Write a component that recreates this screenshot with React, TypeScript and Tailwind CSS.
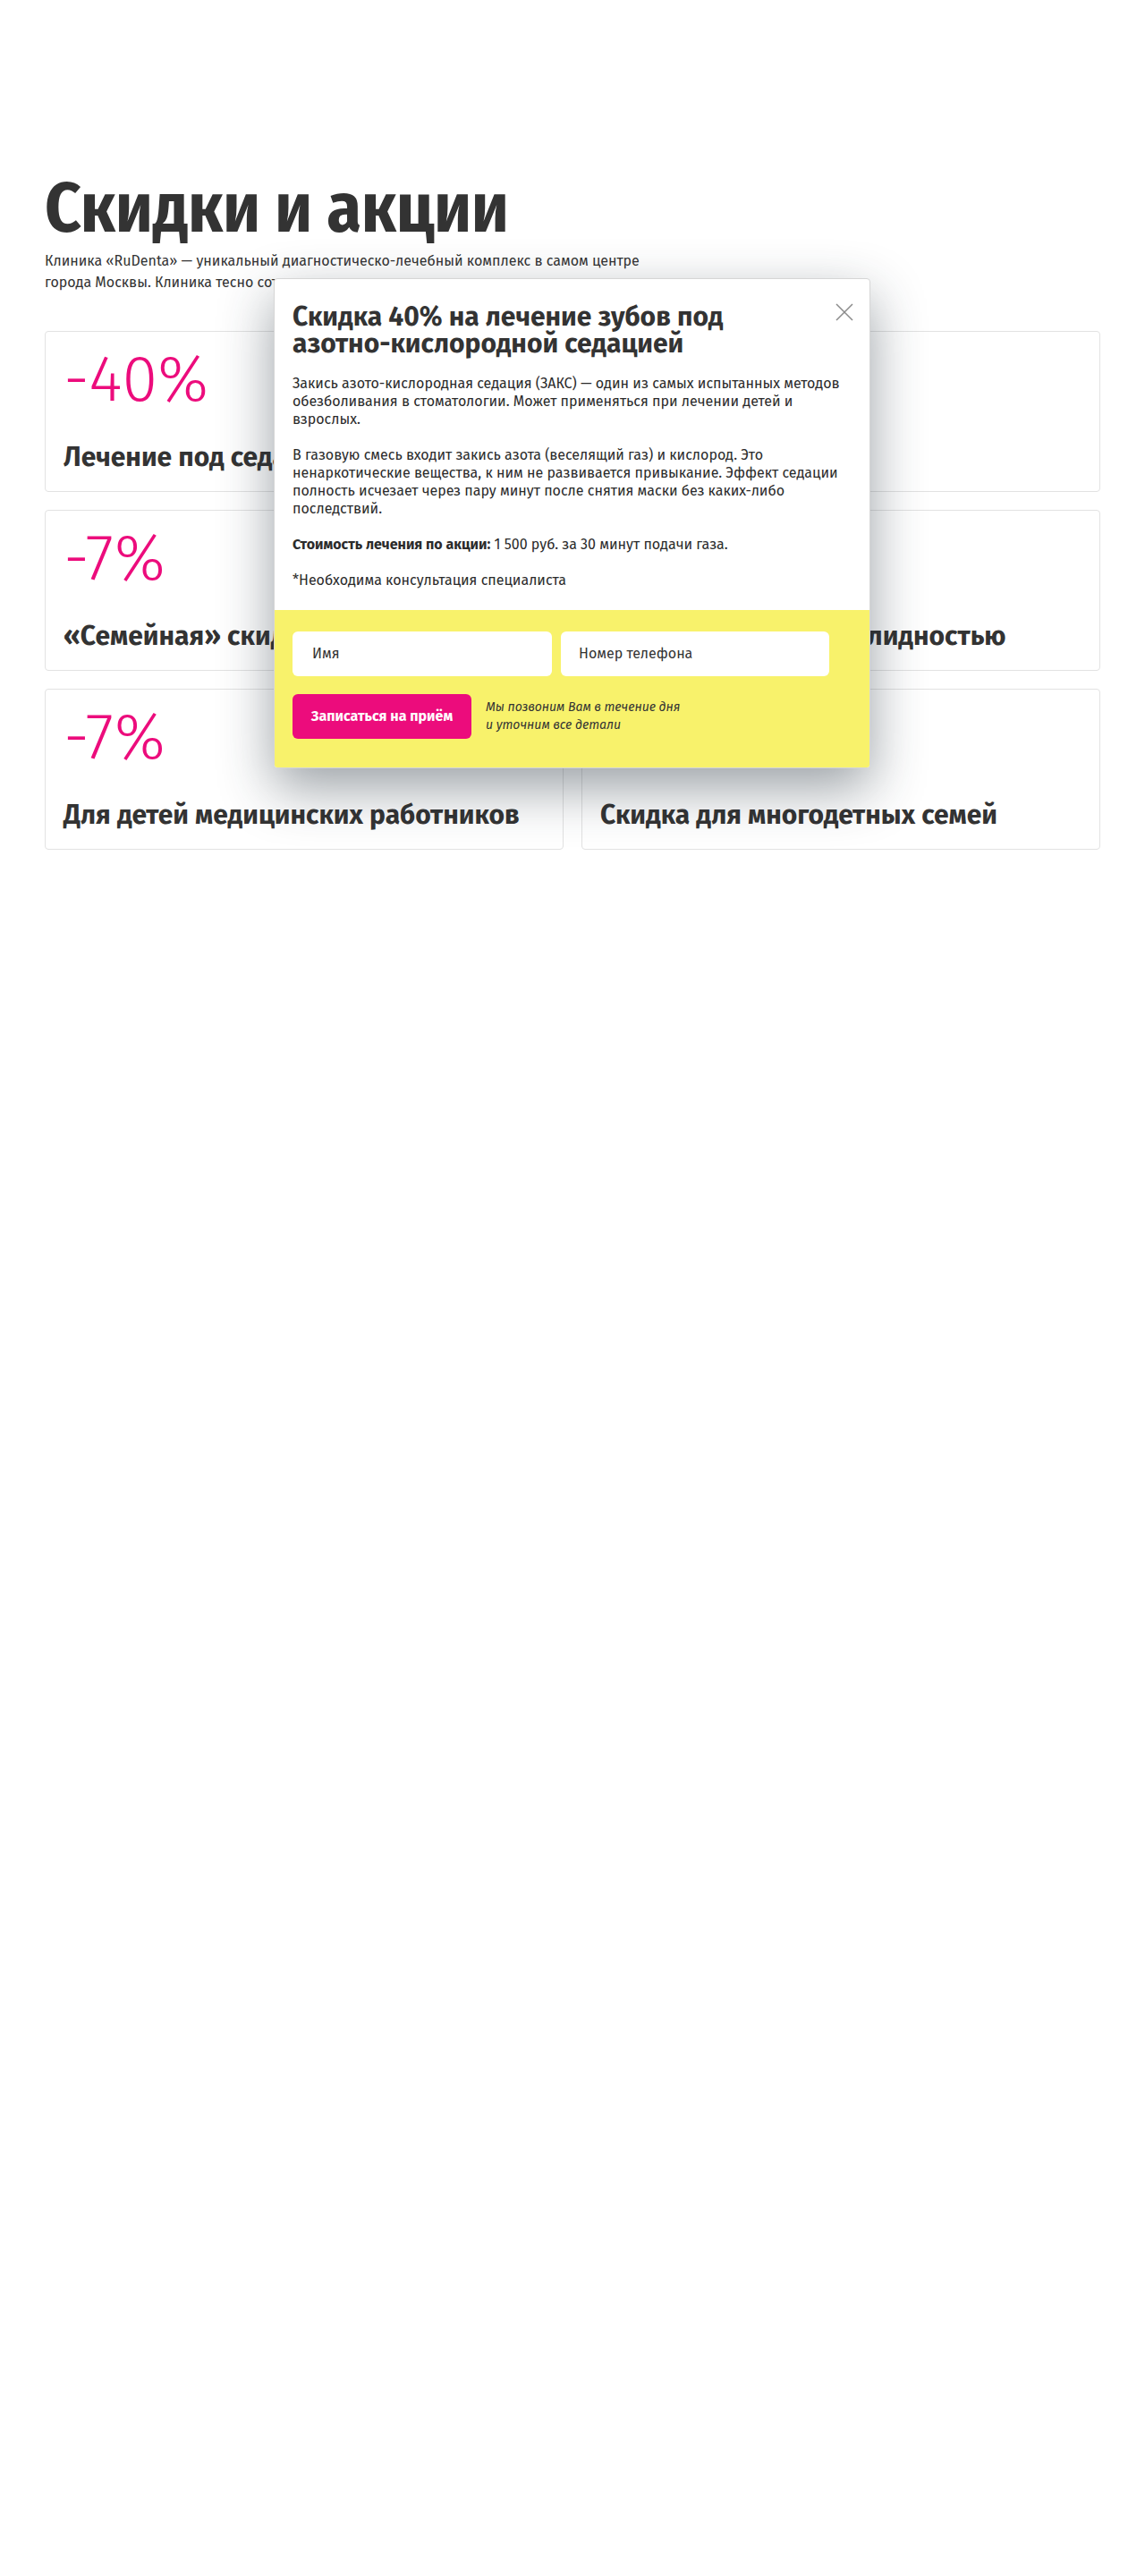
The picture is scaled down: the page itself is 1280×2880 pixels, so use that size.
import React from "react";

const font = { fontFamily: '"Fira Sans", Roboto, "Noto Sans", sans-serif' };
const condensed = { fontFamily: '"Fira Sans Condensed", "Fira Sans", Roboto, sans-serif', fontStretch: "condensed" as const };

type Card = { pct: string; title: string };

const cards: Card[] = [
  { pct: "-40%", title: "Лечение под седацией" },
  { pct: "-10%", title: "Пенсионерам" },
  { pct: "-7%", title: "«Семейная» скидка" },
  { pct: "-10%", title: "Скидка людям с инвалидностью" },
  { pct: "-7%", title: "Для детей медицинских работников" },
  { pct: "-10%", title: "Скидка для многодетных семей" },
];

export default function App() {
  return (
    <div className="relative min-h-[2880px] w-full bg-white text-[#333]" style={font}>
      <div className="mx-auto w-[1180px] pt-[191px]">
        <h1 className="text-[78px] font-bold leading-[84px] text-[#333]" style={condensed}>Скидки и акции</h1>
        <p className="mt-[5px] text-[16px] leading-[24px] text-[#333]">
          Клиника «RuDenta» — уникальный диагностическо-лечебный комплекс в самом центре
          <br />
          города Москвы. Клиника тесно сотрудничает с ведущими медицинскими центрами.
        </p>
        <div className="mt-[42px] grid grid-cols-2 gap-5">
          {cards.map((c, i) => (
            <div key={i} className="flex h-[180px] flex-col justify-between rounded-[4px] border border-[#e2e2e2] bg-white px-5 pb-[18px] pt-[17px]">
              <div className="text-[72px] font-light leading-[72px] text-[#ec0c7c]">{c.pct}</div>
              <div className="whitespace-nowrap text-[30px] font-bold leading-[40px] text-[#333]">{c.title}</div>
            </div>
          ))}
        </div>
      </div>

      <div className="absolute left-[306px] top-[311px] w-[667px] overflow-hidden rounded-[4px] border border-[#d6d6d6] bg-white shadow-[0_22px_60px_rgba(30,45,55,0.45)]">
        <button className="absolute right-[18px] top-[27px] h-5 w-5" aria-label="Закрыть">
          <svg viewBox="0 0 20 20" className="h-5 w-5" fill="none" stroke="#8a8a8a" strokeWidth="1.5">
            <path d="M1 1 L19 19 M19 1 L1 19" />
          </svg>
        </button>
        <div className="px-5 pb-[23px] pt-[27px]">
          <h2 className="text-[30px] font-bold leading-[30px] text-[#333]">
            Скидка 40% на лечение зубов под
            <br />
            азотно-кислородной седацией
          </h2>
          <div className="mt-5 text-[16px] leading-5 text-[#2b2b2b]">
            <p>
              Закись азото-кислородная седация (ЗАКС) — один из самых испытанных методов
              <br />
              обезболивания в стоматологии. Может применяться при лечении детей и
              <br />
              взрослых.
            </p>
            <p className="mt-5">
              В газовую смесь входит закись азота (веселящий газ) и кислород. Это
              <br />
              ненаркотические вещества, к ним не развивается привыкание. Эффект седации
              <br />
              полность исчезает через пару минут после снятия маски без каких-либо
              <br />
              последствий.
            </p>
            <p className="mt-5">
              <b className="font-bold">Стоимость лечения по акции:</b> 1 500 руб. за 30 минут подачи газа.
            </p>
            <p className="mt-5">*Необходима консультация специалиста</p>
          </div>
        </div>
        <div className="bg-[#f8f26b] px-5 pb-8 pt-6">
          <div className="flex gap-[10px]">
            <div className="flex h-[50px] w-[290px] items-center rounded-md bg-white px-[22px] text-[16px] text-[#333]">Имя</div>
            <div className="flex h-[50px] w-[300px] items-center rounded-md bg-white px-5 text-[16px] text-[#333]">Номер телефона</div>
          </div>
          <div className="mt-5 flex items-center">
            <button className="h-[50px] w-[200px] rounded-md bg-[#ec0c7c] text-[16px] font-bold text-white">Записаться на приём</button>
            <div className="ml-4 text-[14px] italic leading-5 text-[#333]">
              Мы позвоним Вам в течение дня
              <br />
              и уточним все детали
            </div>
          </div>
        </div>
      </div>
    </div>
  );
}
